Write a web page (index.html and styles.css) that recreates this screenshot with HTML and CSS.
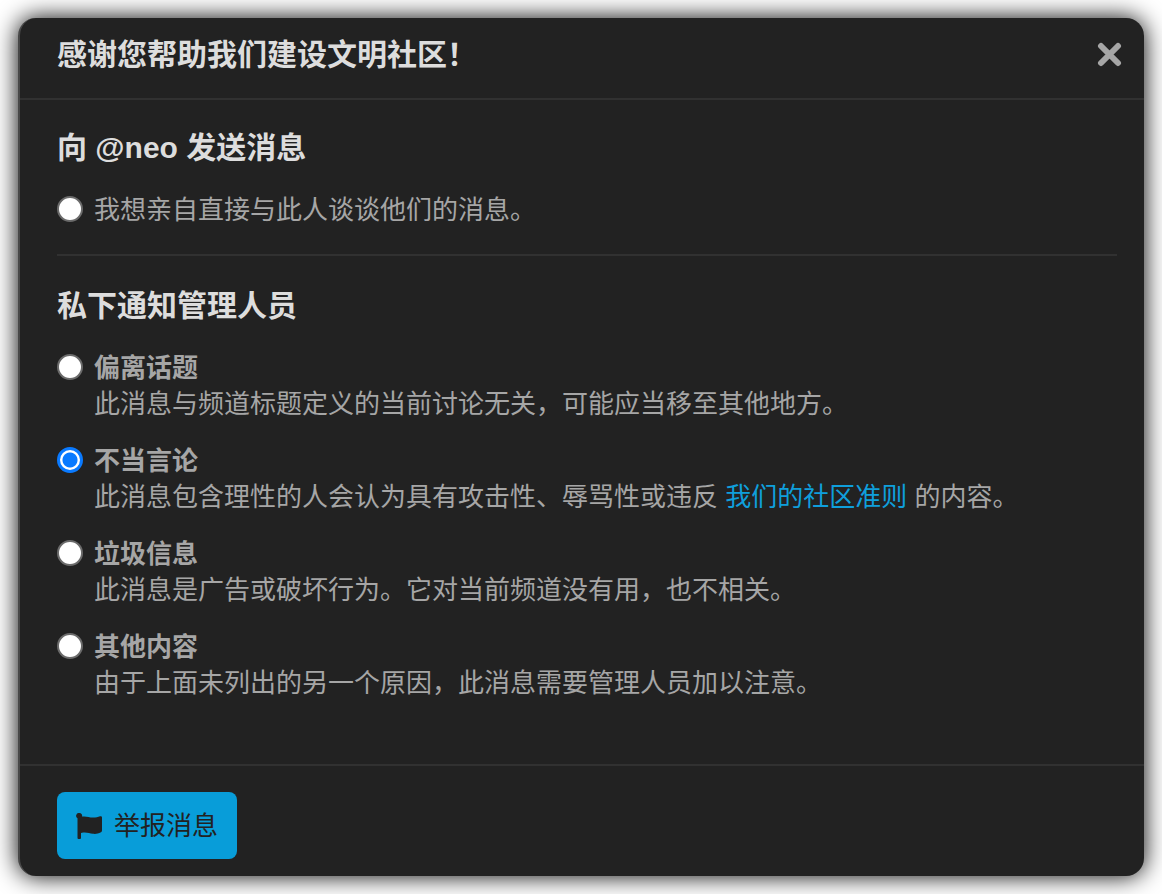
FILE: index.html
```html
<!DOCTYPE html>
<html lang="zh-CN">
<head>
    <meta charset="UTF-8">
    <meta name="viewport" content="width=device-width, initial-scale=1.0">
    <title>举报消息</title>
    <link rel="stylesheet" href="styles.css">
</head>
<body>
    <form class="modal" role="dialog" aria-labelledby="modal-title">
        <header class="modal-header">
            <h2 id="modal-title">感谢您帮助我们建设文明社区！</h2>
            <button type="button" class="close" aria-label="关闭">
                <svg viewBox="0 0 26 26" width="26" height="26"><path d="M4 4L21 21M21 4L4 21" stroke="currentColor" stroke-width="6" stroke-linecap="round"/></svg>
            </button>
        </header>

        <main class="modal-body">
            <section class="group">
                <h3>向 @neo 发送消息</h3>
                <div class="option">
                    <input type="radio" name="flag" id="notify-user">
                    <label for="notify-user">我想亲自直接与此人谈谈他们的消息。</label>
                </div>
            </section>

            <section class="group">
                <h3>私下通知管理人员</h3>
                <div class="option">
                    <input type="radio" name="flag" id="off-topic">
                    <label for="off-topic">
                        <strong>偏离话题</strong>
                        此消息与频道标题定义的当前讨论无关，可能应当移至其他地方。
                    </label>
                </div>
                <div class="option">
                    <input type="radio" name="flag" id="inappropriate" checked>
                    <label for="inappropriate">
                        <strong>不当言论</strong>
                        此消息包含理性的人会认为具有攻击性、辱骂性或违反 <a href="#guidelines">我们的社区准则</a> 的内容。
                    </label>
                </div>
                <div class="option">
                    <input type="radio" name="flag" id="spam">
                    <label for="spam">
                        <strong>垃圾信息</strong>
                        此消息是广告或破坏行为。它对当前频道没有用，也不相关。
                    </label>
                </div>
                <div class="option">
                    <input type="radio" name="flag" id="other">
                    <label for="other">
                        <strong>其他内容</strong>
                        由于上面未列出的另一个原因，此消息需要管理人员加以注意。
                    </label>
                </div>
            </section>
        </main>

        <footer class="modal-footer">
            <button type="button" class="btn-primary">
                <svg viewBox="0 0 26 26" width="26" height="26" aria-hidden="true"><path fill="currentColor" d="M3.200 0A2.800 2.800 0 0 1 6 3.600C10 2.800 13 4.600 17 4.600C20 4.600 22 4 24 3.300Q26 2.800 26 4.400V17.500Q26 18.800 25 19.300C22 20.900 19.500 21 17 20.800C13 20.200 10 18.800 5 20V25Q5 26 4 26H2.500Q1.500 26 1.500 25V5.200A2.800 2.800 0 0 1 3.200 0Z"/></svg>
                举报消息
            </button>
        </footer>
    </form>
</body>
</html>
```

FILE: styles.css
```css
body {
    margin: 0;
    padding: 18px;
    background-color: #ffffff;
    color: #a6a6a6;
    font-family: "Liberation Sans", "Noto Sans CJK SC", sans-serif;
    font-size: 26px;
    line-height: 36px;
}

.modal {
    background-color: #222222;
    border-left: 2px solid #484848;
    border-radius: 18px;
    box-shadow: 0 0 24px #000000;
}

.modal-header {
    display: flex;
    justify-content: space-between;
    align-items: center;
    padding: 19px 21px 25px 37px;
    border-bottom: 2px solid #313131;
}

h2,
h3 {
    margin: 0;
    color: #dddddd;
    font-size: 30px;
    line-height: 36px;
    font-weight: bold;
}

.close {
    display: flex;
    padding: 0;
    border: none;
    background: none;
    color: #a6a6a6;
    cursor: pointer;
}

.modal-body {
    padding: 30px 27px 63px 37px;
}

.group + .group {
    margin-top: 26px;
    padding-top: 32px;
    border-top: 2px solid #313131;
}

.group h3 {
    margin-bottom: 26px;
}

.option {
    display: flex;
    align-items: flex-start;
    gap: 11px;
}

.option + .option {
    margin-top: 21px;
}

.option strong {
    display: block;
}

input[type="radio"] {
    appearance: none;
    flex: none;
    box-sizing: border-box;
    width: 26px;
    height: 26px;
    margin: 4px 0 0;
    border: 2px solid #6b6b6b;
    border-radius: 50%;
    background-color: #ffffff;
}

input[type="radio"]:checked {
    border-color: #0a7aff;
    border-width: 3px;
    background: radial-gradient(circle, #0a7aff 7px, #ffffff 8px);
}

a {
    color: #0f9fdc;
    text-decoration: none;
}

.modal-footer {
    padding: 26px 37px 17px;
    border-top: 2px solid #313131;
}

.btn-primary {
    display: flex;
    align-items: center;
    gap: 12px;
    padding: 16px 19px 15px;
    border: none;
    border-radius: 8px;
    background-color: #089dd9;
    color: #222222;
    font: inherit;
    cursor: pointer;
}
```
